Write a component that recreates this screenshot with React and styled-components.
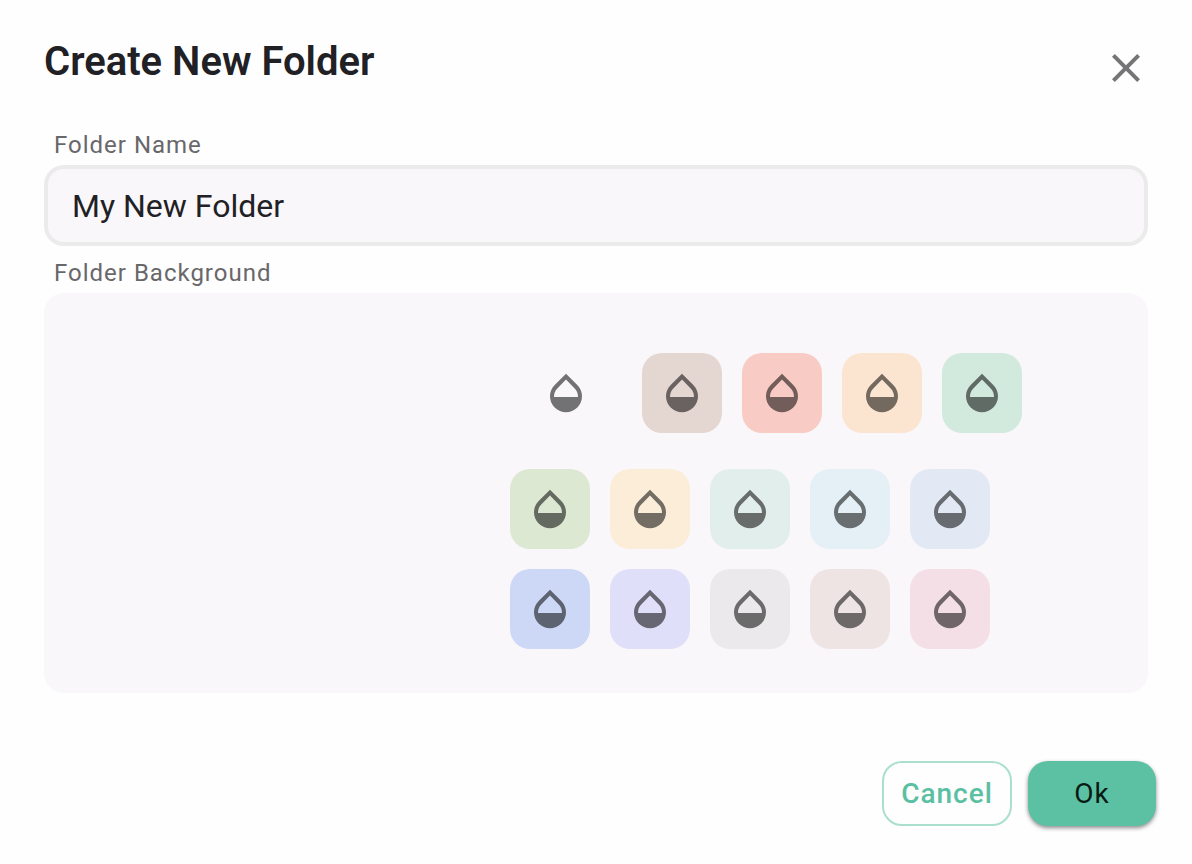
import React, { useState } from 'react';
import styled, { createGlobalStyle } from 'styled-components';

const GlobalStyle = createGlobalStyle`
  * {
    box-sizing: border-box;
  }

  body {
    margin: 0;
    background-color: #fefefe;
    color: #212125;
    font-family: Roboto, sans-serif;
  }
`;

const Dialog = styled.form`
  padding: 36px 36px 36px 44px;
`;

const Header = styled.header`
  display: flex;
  justify-content: space-between;
  align-items: flex-start;
  padding-right: 6px;
  margin-bottom: 37px;
`;

const Title = styled.h1`
  margin: 0;
  font-size: 40px;
  font-weight: 600;
  line-height: 52px;
`;

const IconButton = styled.button`
  display: flex;
  margin-top: 8px;
  padding: 0;
  border: none;
  background: none;
  color: #757477;
  cursor: pointer;
`;

const Body = styled.div`
  padding-right: 8px;
`;

const Label = styled.label`
  display: block;
  padding: 0 10px;
  color: #68676a;
  font-size: 24px;
  letter-spacing: 1px;
  line-height: 32px;
`;

const Input = styled.input`
  display: block;
  width: 100%;
  height: 81px;
  margin: 4px 0 11px;
  padding: 0 24px;
  border: 4px solid #ebebec;
  border-radius: 20px;
  background-color: #f9f7fa;
  color: #212125;
  font-family: inherit;
  font-size: 32px;
  outline: none;
`;

const Palette = styled.div`
  display: flex;
  flex-direction: column;
  align-items: flex-end;
  margin-top: 4px;
  padding: 60px 158px 44px 0;
  border-radius: 20px;
  background-color: #f9f7fa;
`;

const SwatchRow = styled.div`
  display: flex;
  gap: 20px;
  margin-bottom: ${({ $first }) => ($first ? '36px' : '20px')};
  margin-right: ${({ $first }) => ($first ? '-32px' : '0')};

  &:last-child {
    margin-bottom: 0;
  }
`;

const Swatch = styled.button`
  display: flex;
  justify-content: center;
  align-items: center;
  width: 80px;
  height: 80px;
  margin-right: ${({ $color }) => ($color === 'transparent' ? '16px' : '0')};
  padding: 0;
  border: none;
  border-radius: 20px;
  background-color: ${({ $color }) => $color};
  color: rgba(0, 0, 0, 0.54);
  cursor: pointer;
`;

const Actions = styled.footer`
  display: flex;
  justify-content: flex-end;
  align-items: flex-start;
  gap: 16px;
  margin-top: 68px;
`;

const Button = styled.button`
  width: 130px;
  height: 65px;
  padding: 0;
  border: 2px solid #aadfcd;
  border-radius: 20px;
  background-color: #fefefe;
  color: #5bc0a2;
  font-family: inherit;
  font-size: 28px;
  font-weight: 500;
  letter-spacing: 1px;
  cursor: pointer;
`;

const PrimaryButton = styled(Button)`
  width: 128px;
  border: none;
  background-color: #5cc1a3;
  color: #071a14;
  font-weight: 400;
  box-shadow: 0 2px 4px rgba(0, 0, 0, 0.45);
`;

const rows = [
  ['transparent', '#e4d6d1', '#f9cbc5', '#fbe5d0', '#d2eade'],
  ['#dce8d1', '#fbedd8', '#e2eeec', '#e4eff6', '#e2e9f5'],
  ['#ccd8f6', '#e0dffa', '#ebe9ec', '#efe4e4', '#f5dfe6'],
];

function CloseIcon() {
  return (
    <svg width='48' height='48' viewBox='0 0 24 24' fill='currentColor' aria-hidden='true'>
      <path d='M19 6.41L17.59 5 12 10.59 6.41 5 5 6.41 10.59 12 5 17.59 6.41 19 12 13.41 17.59 19 19 17.59 13.41 12z' />
    </svg>
  );
}

function DropIcon() {
  return (
    <svg width='48' height='48' viewBox='0 0 24 24' fill='currentColor' aria-hidden='true'>
      <path d='M17.66 8L12 2.35 6.34 8C4.78 9.56 4 11.64 4 13.64s.78 4.11 2.34 5.67 3.61 2.35 5.66 2.35 4.1-.79 5.66-2.35S20 15.64 20 13.64 19.22 9.56 17.66 8zM6 14c.01-2 .62-3.27 1.76-4.4L12 5.27l4.24 4.38C17.38 10.77 17.99 12 18 14H6z' />
    </svg>
  );
}

function App() {
  const [name, setName] = useState('My New Folder');
  const [background, setBackground] = useState('transparent');

  const handleSubmit = (e) => {
    e.preventDefault();
  };

  return (
    <>
      <GlobalStyle />
      <Dialog onSubmit={handleSubmit}>
        <Header>
          <Title>Create New Folder</Title>
          <IconButton type='button' aria-label='Close'>
            <CloseIcon />
          </IconButton>
        </Header>

        <Body>
          <Label htmlFor='folder-name'>Folder Name</Label>
          <Input
            id='folder-name'
            type='text'
            value={name}
            onChange={(e) => setName(e.target.value)}
          />

          <Label as='div' id='folder-background'>
            Folder Background
          </Label>
          <Palette role='group' aria-labelledby='folder-background'>
            {rows.map((colors, index) => (
              <SwatchRow key={colors[0]} $first={index === 0}>
                {colors.map((color) => (
                  <Swatch
                    key={color}
                    type='button'
                    $color={color}
                    aria-label={`Background ${color}`}
                    aria-pressed={background === color}
                    onClick={() => setBackground(color)}
                  >
                    <DropIcon />
                  </Swatch>
                ))}
              </SwatchRow>
            ))}
          </Palette>
        </Body>

        <Actions>
          <Button type='button'>Cancel</Button>
          <PrimaryButton type='submit'>Ok</PrimaryButton>
        </Actions>
      </Dialog>
    </>
  );
}

export default App;
